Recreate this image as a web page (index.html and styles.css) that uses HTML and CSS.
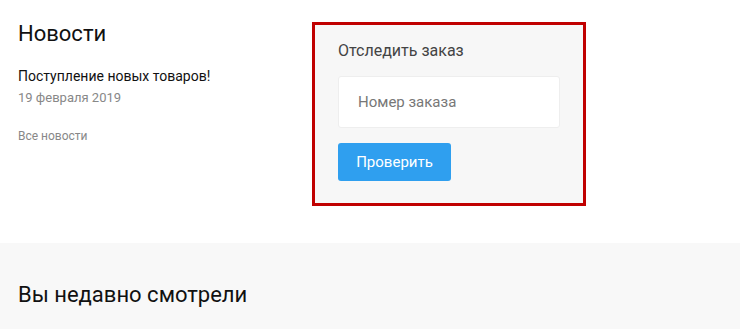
FILE: index.html
```html
<!DOCTYPE html>
<html lang="ru">
<head>
    <meta charset="UTF-8">
    <meta name="viewport" content="width=device-width, initial-scale=1.0">
    <title>Новости</title>
    <link rel="stylesheet" href="styles.css">
</head>
<body>
    <div class="top-row">
        <div class="news">
            <h2>Новости</h2>
            <div class="news-item">
                <a href="#" class="news-title">Поступление новых товаров!</a>
                <div class="news-date">19 февраля 2019</div>
            </div>
            <a href="#" class="news-all">Все новости</a>
        </div>
        <div class="track-order">
            <div class="track-title">Отследить заказ</div>
            <form id="trackForm">
                <input type="text" class="track-input" placeholder="Номер заказа">
                <button type="submit" class="btn-check">Проверить</button>
            </form>
        </div>
    </div>

    <div class="viewed">
        <h2>Вы недавно смотрели</h2>
    </div>
</body>
</html>
```

FILE: styles.css
```css
body {
    font-family: Roboto, "Noto Sans", Arial, sans-serif;
    background-color: #fff;
    margin: 0;
    padding: 0;
    color: #111;
}
h2 {
    font-weight: 400;
    font-size: 22px;
    margin: 0;
    color: #111;
}
.top-row {
    display: flex;
    padding: 22px 18px 37px;
    height: 184px;
}
.news {
    width: 294px;
}
.news h2 {
    line-height: 26px;
    margin-top: -1px;
}
.news-item {
    margin-top: 19px;
}
.news-title {
    display: block;
    font-size: 14px;
    line-height: 21px;
    color: #111;
    text-decoration: none;
}
.news-date {
    font-size: 13px;
    line-height: 21px;
    color: #888;
}
.news-all {
    display: block;
    margin-top: 21px;
    font-size: 12px;
    line-height: 14px;
    color: #888;
    text-decoration: none;
}
.track-order {
    box-sizing: border-box;
    width: 274px;
    height: 184px;
    background: #f7f7f7;
    border: 3px solid #c00000;
    padding: 16px 23px;
}
.track-title {
    font-size: 16px;
    line-height: 20px;
    color: #444;
}
.track-input {
    display: block;
    box-sizing: border-box;
    width: 222px;
    height: 52px;
    margin-top: 15px;
    padding: 0 19px;
    border: 1px solid #eee;
    border-radius: 3px;
    background: #fff;
    font-family: inherit;
    font-size: 15px;
    color: #333;
}
.track-input::placeholder {
    color: #777;
}
.btn-check {
    display: block;
    margin-top: 15px;
    width: 113px;
    height: 38px;
    border: none;
    border-radius: 3px;
    background-color: #2f9fef;
    color: #fff;
    font-family: inherit;
    font-size: 15px;
    cursor: pointer;
}
.viewed {
    background: #f8f8f8;
    padding: 39px 18px 40px;
}
.viewed h2 {
    line-height: 26px;
}
```
